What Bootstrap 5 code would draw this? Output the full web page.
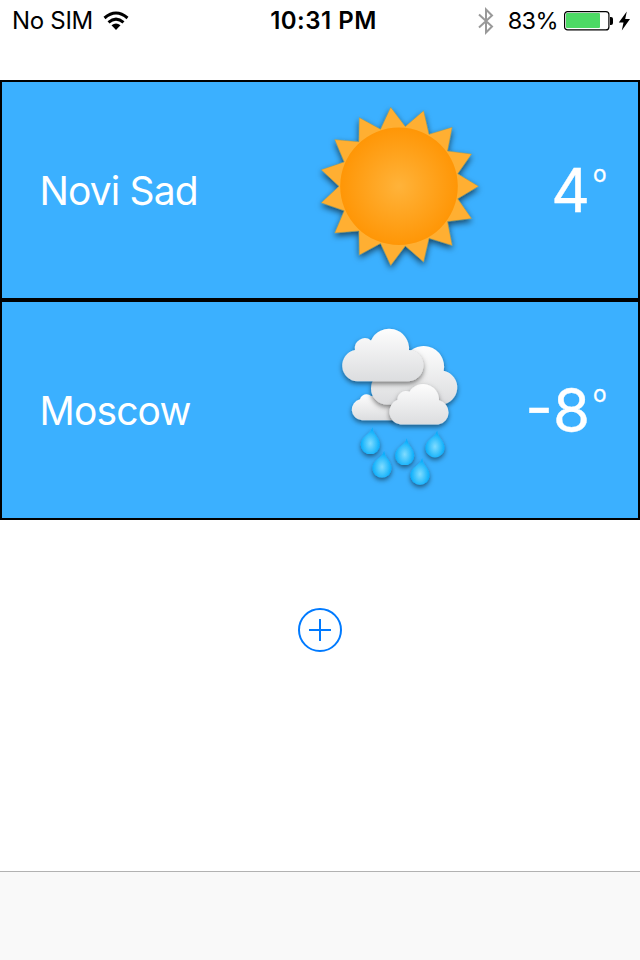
<!DOCTYPE html>
<html lang="en">
<head>
<meta charset="utf-8">
<meta name="viewport" content="width=device-width, initial-scale=1">
<title>Weather</title>
<link href="https://cdn.jsdelivr.net/npm/bootstrap@5.3.0/dist/css/bootstrap.min.css" rel="stylesheet">
<style>
  body { font-family: Inter, Roboto, sans-serif; color: #000; }
  svg { display: block; flex: none; }
  .status-bar { height: 80px; display: grid; grid-template-columns: 1fr auto 1fr; align-items: start; font-size: 24px; line-height: 41px; padding: 0 9px 0 12px; }
  .status-item { height: 41px; }
  .carrier { letter-spacing: -.3px; margin-right: 10px; }
  .clock { font-weight: 600; letter-spacing: .5px; padding-left: 4px; }
  .battery-label { font-size: 23.500px; letter-spacing: -.6px; margin: 0 6px 0 13px; }
  .city-row { height: 220px; border: 2px solid #000; background: #3bb0ff; color: #fff; }
  .city-name { font-size: 39px; letter-spacing: -.85px; width: 270.500px; margin-left: 37.500px; line-height: 1; }
  .temp { font-size: 60px; line-height: 1; margin-right: 2px; -webkit-text-stroke: .4px #fff; }
  .degree { font-size: 22.500px; line-height: 24px; width: 46px; margin-top: -33px; padding-left: 1px; -webkit-text-stroke: .3px #fff; }
  .add-area { padding-top: 88px; }
  .tool-bar { height: 89px; background: #f9f9f9; border-top: 1px solid #b2b2b2; }
</style>
</head>
<body class="bg-white">
<div class="d-flex flex-column vh-100 overflow-hidden">
  <header class="status-bar">
    <div class="status-item d-flex align-items-center">
      <span class="carrier">No SIM</span>
      <svg id="wifi" width="26" height="20" viewBox="0 0 26 20" fill="none" stroke="#000" stroke-width="3">
        <path d="M1.500 7Q13 -3 24.500 7M5.500 11.300Q13 5 20.500 11.300"/>
        <path d="M8.500 14.300Q13 10.800 17.500 14.300L13 19Z" fill="#000" stroke="none"/>
      </svg>
    </div>
    <div class="status-item clock">10:31 PM</div>
    <div class="status-item d-flex align-items-center justify-content-end">
      <svg id="bluetooth" width="18" height="28" viewBox="0 0 18 28" fill="none" stroke="#999" stroke-width="2"><path d="M2 7.500L15 19.500L9 25.500V2.500L15 8.500L2 20.500"/></svg>
      <span class="battery-label">83%</span>
      <svg id="battery" class="me-1" width="50" height="20" viewBox="0 0 50 20">
        <rect x=".6" y=".6" width="44.300" height="18.300" rx="3" fill="#fff" stroke="#000" stroke-width="1.200"/>
        <rect x="2" y="2" width="34" height="15" rx="1" fill="#4cd964"/>
        <path d="M46 6h1a2 2 0 0 1 2 2v4a2 2 0 0 1-2 2h-1z"/>
      </svg>
      <svg id="charge" width="13" height="20" viewBox="0 0 13 20"><path d="M8.800.5L.8 11.500H5.500L3.800 19.500L12 8H7.200Z"/></svg>
    </div>
  </header>

  <main class="flex-grow-1">
    <section class="city-row d-flex align-items-center">
      <div class="city-name">Novi Sad</div>
      <svg width="180" height="214" viewBox="310 83 180 214">
        <defs>
          <radialGradient id="sunDisc"><stop offset="0" stop-color="#ffb33a"/><stop offset="1" stop-color="#ff9606"/></radialGradient>
          <filter id="shade" x="-20%" y="-20%" width="140%" height="150%"><feDropShadow dx="0" dy="3" stdDeviation="3" flood-color="#000" flood-opacity=".6"/></filter>
        </defs>
        <path id="rays" fill="#ffaf31" stroke="#8b9159" stroke-width=".4" filter="url(#shade)"/>
        <circle cx="399" cy="186.300" r="58.800" fill="url(#sunDisc)"/>
      </svg>
      <div class="temp ms-auto">4</div>
      <div class="degree">o</div>
    </section>

    <section class="city-row d-flex align-items-center">
      <div class="city-name">Moscow</div>
      <svg width="180" height="214" viewBox="310 303 180 214">
        <defs>
          <linearGradient id="cloud" x2="0" y2="1"><stop offset="0" stop-color="#fdfdfd"/><stop offset="1" stop-color="#dcdddf"/></linearGradient>
          <radialGradient id="water" cx=".5" cy=".6" r=".5"><stop offset="0" stop-color="#80dcff"/><stop offset="1" stop-color="#09aefb"/></radialGradient>
          <filter id="soft" x="-30%" y="-30%" width="160%" height="170%"><feDropShadow dx="0" dy="2.500" stdDeviation="2.600" flood-color="#000" flood-opacity=".5"/></filter>
          <path id="drop" d="M2.200 -17.500C2.500 -10.500 9.500 -7.500 9.500 0A9.500 9.300 0 0 1 -9.500 0C-9.500 -8.500 -.3 -9.500 2.200 -17.500Z"/>
        </defs>
        <g fill="url(#water)">
          <use href="#drop" x="370.300" y="444.800" filter="url(#soft)"/>
          <use href="#drop" x="404.700" y="455.800" filter="url(#soft)"/>
          <use href="#drop" x="435" y="448" filter="url(#soft)"/>
          <use href="#drop" x="382" y="468.300" filter="url(#soft)"/>
          <use href="#drop" x="420" y="475.500" filter="url(#soft)"/>
        </g>
        <g fill="url(#cloud)">
          <path filter="url(#soft)" d="M362 420.300A10.700 10.700 0 0 1 360 399.200A6.800 6.800 0 0 1 371 396L395 398V420.300Z"/>
          <path filter="url(#soft)" d="M387 404.500A16 16 0 0 1 371 388.500A16 16 0 0 1 385 372.500A9 9 0 0 1 404 360A20.600 20.600 0 0 1 443.700 370.700A17.100 17.100 0 0 1 441 404.500Z"/>
          <path filter="url(#soft)" d="M400.500 424.600A12.900 12.900 0 0 1 397.500 399.800A8.500 8.500 0 0 1 409.500 391.700A15.900 15.900 0 0 1 439 400.300A12.400 12.400 0 0 1 438.300 424.600Z"/>
          <path filter="url(#soft)" d="M357.500 381.300A15.800 15.800 0 0 1 355 350A9.900 9.900 0 0 1 371 340.500A19.900 19.900 0 0 1 409 350A15.700 15.700 0 0 1 406.500 381.300Z"/>
        </g>
      </svg>
      <div class="temp ms-auto">-8</div>
      <div class="degree">o</div>
    </section>

    <div class="add-area d-flex justify-content-center">
      <button type="button" class="btn p-0 border-0" aria-label="Add city">
        <svg width="44" height="44" viewBox="0 0 44 44" fill="none" stroke="#007aff" stroke-width="2"><circle cx="22" cy="22" r="21"/><path d="M11 22H33M22 11V33"/></svg>
      </button>
    </div>
  </main>
  <footer class="tool-bar"></footer>
</div>
<script src="https://cdn.jsdelivr.net/npm/bootstrap@5.3.0/dist/js/bootstrap.bundle.min.js"></script>
<script>
  // Fifteen rays: alternate outer tips and inner valleys around the disc.
  const points = [];
  for (let i = 0; i < 30; i++) {
    const r = i % 2 ? 60 : 79.5, a = i * Math.PI / 15;
    points.push((399 + r * Math.cos(a)).toFixed(1) + ' ' + (186.3 + r * Math.sin(a)).toFixed(1));
  }
  document.getElementById('rays').setAttribute('d', 'M' + points.join('L') + 'Z');
</script>
</body>
</html>
